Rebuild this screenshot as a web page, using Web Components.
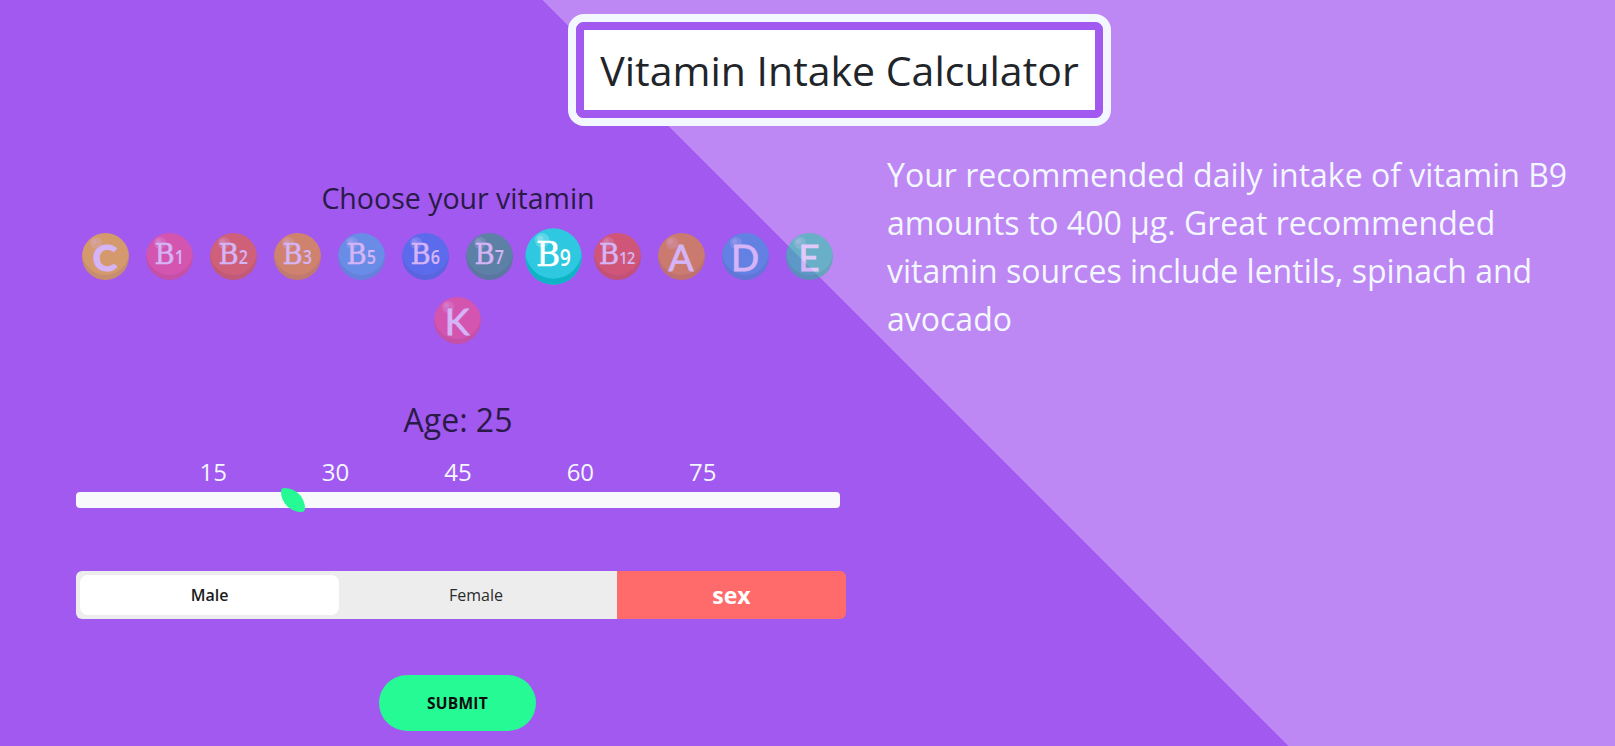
<!DOCTYPE html>
<html lang="en">
<head>
<meta charset="utf-8">
<title>Vitamin Intake Calculator</title>
<style>
html, body { margin: 0; height: 100%; }
body { font-family: "Open Sans", "Liberation Sans", sans-serif; }
</style>
</head>
<body>
<vitamin-app>
    <page-title slot="title">Vitamin Intake Calculator</page-title>
    <div slot="form">
        <vitamin-picker caption="Choose your vitamin">
            <vitamin-ball letter="C" color="#ffcf06"></vitamin-ball>
            <vitamin-ball letter="B" sub="1" color="#fd527c"></vitamin-ball>
            <vitamin-ball letter="B" sub="2" color="#f5661a"></vitamin-ball>
            <vitamin-ball letter="B" sub="3" color="#f5a708"></vitamin-ball>
            <vitamin-ball letter="B" sub="5" color="#3cb6e2"></vitamin-ball>
            <vitamin-ball letter="B" sub="6" color="#247aea"></vitamin-ball>
            <vitamin-ball letter="B" sub="7" color="#26a06e"></vitamin-ball>
            <vitamin-ball letter="B" sub="9" color="#2ec9e0" active></vitamin-ball>
            <vitamin-ball letter="B" sub="12" color="#f5541a"></vitamin-ball>
            <vitamin-ball letter="A" color="#ee9508"></vitamin-ball>
            <vitamin-ball letter="D" color="#31a0db"></vitamin-ball>
            <vitamin-ball letter="E" color="#26cfa6"></vitamin-ball>
            <vitamin-ball letter="K" color="#fd527c"></vitamin-ball>
        </vitamin-picker>
        <age-slider age="25"></age-slider>
        <sex-toggle></sex-toggle>
        <submit-button>Submit</submit-button>
    </div>
    <intake-result slot="result">Your recommended daily intake of vitamin B9 amounts to 400 µg. Great recommended vitamin sources include lentils, spinach and avocado</intake-result>
</vitamin-app>

<script>
class VitaminApp extends HTMLElement {
    constructor() {
        super();
        this.shadowDOM = this.attachShadow({ mode: "open" });
    }

    connectedCallback() {
        this.shadowDOM.innerHTML = `
        <style>
        :host {
            display: block;
            height: 746px;
            overflow: hidden;
            box-sizing: border-box;
            padding-top: 14px;
            font-family: "Open Sans", "Liberation Sans", sans-serif;
            background: linear-gradient(45deg, #a259ef 911px, #bd88f3 911px);
        }
        .head {
            display: flex;
            justify-content: center;
            padding-left: 64px;
        }
        .main {
            display: grid;
            grid-template-columns: 770px 1fr;
            column-gap: 41px;
            padding: 25px 40px 0 76px;
        }
        </style>
        <div class="head"><slot name="title"></slot></div>
        <div class="main">
            <div><slot name="form"></slot></div>
            <div><slot name="result"></slot></div>
        </div>`;
    }
}

class PageTitle extends HTMLElement {
    constructor() {
        super();
        this.shadowDOM = this.attachShadow({ mode: "open" });
    }

    connectedCallback() {
        this.shadowDOM.innerHTML = `
        <style>
        :host {
            display: block;
            border: 8px solid #f3f7ff;
            border-radius: 16px;
        }
        h1 {
            margin: 0;
            width: 511px;
            height: 80px;
            border: 8px solid #a259ef;
            border-radius: 8px;
            background: #fff;
            background-clip: padding-box;
            color: #212529;
            font-size: 41px;
            font-weight: 400;
            line-height: 80px;
            text-align: center;
            white-space: nowrap;
        }
        </style>
        <h1><slot></slot></h1>`;
    }
}

class VitaminPicker extends HTMLElement {
    constructor() {
        super();
        this.shadowDOM = this.attachShadow({ mode: "open" });
    }

    connectedCallback() {
        this.shadowDOM.innerHTML = `
        <style>
        :host {
            display: block;
            padding-top: 26px;
        }
        h2 {
            margin: 0;
            width: 764px;
            color: #2a1a48;
            font-size: 28.5px;
            font-weight: 400;
            line-height: 43px;
            text-align: center;
            white-space: nowrap;
        }
        .balls {
            display: flex;
            flex-wrap: wrap;
            justify-content: center;
            margin: 4px 0 0 -5px;
            width: 772px;
        }
        </style>
        <h2>${this.getAttribute("caption")}</h2>
        <div class="balls"><slot></slot></div>`;
    }
}

class VitaminBall extends HTMLElement {
    constructor() {
        super();
        this.shadowDOM = this.attachShadow({ mode: "open" });
    }

    connectedCallback() {
        const sub = this.getAttribute("sub");
        this.shadowDOM.innerHTML = `
        <style>
        :host {
            display: block;
            width: 64px;
            height: 64px;
        }
        .ball {
            position: relative;
            width: 47px;
            height: 47px;
            margin: 8.5px;
            border-radius: 50%;
            background: ${this.getAttribute("color")};
            box-shadow: inset 0 -5px 0 rgba(0, 0, 0, 0.1);
            opacity: 0.55;
            display: flex;
            align-items: baseline;
            justify-content: center;
            color: #fff;
            line-height: 47px;
        }
        :host([active]) .ball {
            opacity: 1;
            transform: scale(1.2);
            box-shadow: inset 0 -5px 0 #0eb4c6;
        }
        .shine {
            position: absolute;
            left: 8px;
            top: 4px;
            width: 12px;
            height: 12px;
            border-radius: 50%;
            background: rgba(255, 255, 255, 0.22);
        }
        .shine::after {
            content: "";
            position: absolute;
            left: 2px;
            top: 2px;
            width: 5px;
            height: 5px;
            border-radius: 50%;
            background: rgba(255, 255, 255, 0.22);
        }
        .letter {
            font-family: "Lato", "Liberation Sans", sans-serif;
            font-size: 37px;
            font-weight: 400;
            -webkit-text-stroke: 0.8px #fff;
        }
        :host([letter="C"]) .letter {
            font-weight: 700;
            -webkit-text-stroke: 1.2px #fff;
        }
        .serif {
            font-family: "DejaVu Serif", "Liberation Serif", serif;
            font-size: 27.5px;
            letter-spacing: -1px;
            -webkit-text-stroke: 0.4px #fff;
            position: relative;
            top: -2px;
        }
        .sub {
            font-family: "Open Sans", "Liberation Sans", sans-serif;
            font-size: 19px;
            font-weight: 600;
            display: inline-block;
            width: 10px;
            text-align: center;
            position: relative;
            top: -2px;
            transform: scaleX(0.85);
        }
        .sub.two {
            width: 17px;
            font-size: 17px;
            letter-spacing: -0.5px;
        }
        </style>
        <div class="ball">
            <span class="shine"></span>
            <span class="letter ${sub ? "serif" : ""}">${this.getAttribute("letter")}</span>${sub ? `<span class="sub ${sub.length > 1 ? "two" : ""}">${sub}</span>` : ""}
        </div>`;
    }
}

class AgeSlider extends HTMLElement {
    constructor() {
        super();
        this.shadowDOM = this.attachShadow({ mode: "open" });
    }

    connectedCallback() {
        const ticks = [15, 30, 45, 60, 75].map((t) => `<span>${t}</span>`).join("");
        this.shadowDOM.innerHTML = `
        <style>
        :host {
            display: block;
            padding-top: 44px;
            width: 764px;
        }
        h3 {
            margin: 0;
            color: #2a1a48;
            font-size: 32px;
            font-weight: 400;
            line-height: 48px;
            text-align: center;
        }
        .ticks {
            display: flex;
            padding: 10px 0 0 76px;
            height: 48px;
            box-sizing: border-box;
            color: #f3f7ff;
            font-size: 24px;
            line-height: 36px;
        }
        .ticks span {
            width: 122.4px;
            text-align: center;
        }
        .track {
            position: relative;
            height: 16px;
            border-radius: 4px;
            background: #f8f9fb;
        }
        .thumb {
            position: absolute;
            left: 205px;
            top: -4px;
            width: 24px;
            height: 24px;
            border-radius: 4px 100% 4px 100%;
            background: #26fa95;
        }
        </style>
        <h3>Age: ${this.getAttribute("age")}</h3>
        <div class="ticks">${ticks}</div>
        <div class="track"><div class="thumb"></div></div>`;
    }
}

class SexToggle extends HTMLElement {
    constructor() {
        super();
        this.shadowDOM = this.attachShadow({ mode: "open" });
    }

    connectedCallback() {
        this.shadowDOM.innerHTML = `
        <style>
        :host {
            display: flex;
            width: 770px;
            height: 48px;
            margin-top: 63px;
            border-radius: 6px;
            overflow: hidden;
        }
        .options {
            flex: 1;
            display: flex;
            padding: 4px;
            background: #ededed;
            font-size: 16px;
            color: #2b2b2b;
        }
        .options span {
            display: flex;
            align-items: center;
            justify-content: center;
            border-radius: 8px;
        }
        .male {
            width: 259px;
            background: #fff;
            font-weight: 600;
            color: #1c1c1c;
        }
        .female {
            flex: 1;
        }
        .label {
            width: 229px;
            display: flex;
            align-items: center;
            justify-content: center;
            background: #ff6b6b;
            color: #fff;
            font-size: 23px;
            font-weight: 700;
        }
        </style>
        <div class="options">
            <span class="male">Male</span>
            <span class="female">Female</span>
        </div>
        <div class="label">sex</div>`;
    }
}

class SubmitButton extends HTMLElement {
    constructor() {
        super();
        this.shadowDOM = this.attachShadow({ mode: "open" });
    }

    connectedCallback() {
        this.shadowDOM.innerHTML = `
        <style>
        :host {
            display: flex;
            justify-content: center;
            width: 763px;
            margin-top: 56px;
        }
        button {
            width: 157px;
            height: 56px;
            padding: 0;
            border: 0;
            border-radius: 28px;
            background: #26fa95;
            color: #0c0c0c;
            font: 700 15.5px "Open Sans", "Liberation Sans", sans-serif;
            letter-spacing: 0.3px;
            text-transform: uppercase;
        }
        </style>
        <button type="button"><slot></slot></button>`;
    }
}

class IntakeResult extends HTMLElement {
    constructor() {
        super();
        this.shadowDOM = this.attachShadow({ mode: "open" });
    }

    connectedCallback() {
        this.shadowDOM.innerHTML = `
        <style>
        :host {
            display: block;
            color: #f3f7ff;
            font-size: 32px;
            line-height: 48px;
        }
        </style>
        <slot></slot>`;
    }
}

customElements.define("vitamin-app", VitaminApp);
customElements.define("page-title", PageTitle);
customElements.define("vitamin-picker", VitaminPicker);
customElements.define("vitamin-ball", VitaminBall);
customElements.define("age-slider", AgeSlider);
customElements.define("sex-toggle", SexToggle);
customElements.define("submit-button", SubmitButton);
customElements.define("intake-result", IntakeResult);
</script>
</body>
</html>
